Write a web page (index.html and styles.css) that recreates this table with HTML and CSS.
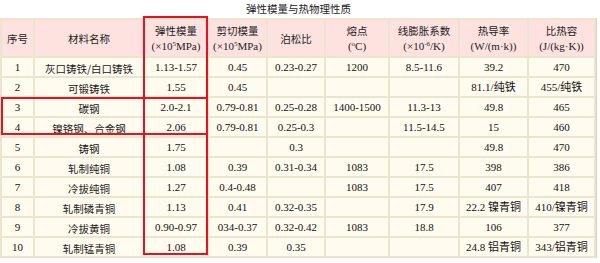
FILE: index.html
```html
<!DOCTYPE html>
<html lang="zh-CN">
<head>
<meta charset="utf-8">
<title>弹性模量与热物理性质</title>
<link rel="stylesheet" href="styles.css">
</head>
<body>
<div class="wrap">
  <div class="title">弹性模量与热物理性质</div>
  <table class="tbl">
    <colgroup>
      <col class="c1"><col class="c2"><col class="c3"><col class="c4"><col class="c5"><col class="c6"><col class="c7"><col class="c8"><col class="c9">
    </colgroup>
    <thead>
      <tr>
        <th>序号</th>
        <th>材料名称</th>
        <th>弹性模量<br><span class="u">(×10<sup>5</sup>MPa)</span></th>
        <th>剪切模量<br><span class="u">(×10<sup>5</sup>MPa)</span></th>
        <th>泊松比</th>
        <th>熔点<br><span class="u">(<sup>o</sup>C)</span></th>
        <th>线膨胀系数<br><span class="u">(×10<sup>-6</sup>/K)</span></th>
        <th>热导率<br><span class="u">(W/(m·k))</span></th>
        <th>比热容<br><span class="u">(J/(kg·K))</span></th>
      </tr>
    </thead>
    <tbody>
      <tr><td>1</td><td>灰口铸铁/白口铸铁</td><td>1.13-1.57</td><td>0.45</td><td>0.23-0.27</td><td>1200</td><td>8.5-11.6</td><td>39.2</td><td>470</td></tr>
      <tr><td>2</td><td>可锻铸铁</td><td>1.55</td><td>0.45</td><td></td><td></td><td></td><td>81.1/纯铁</td><td>455/纯铁</td></tr>
      <tr><td>3</td><td>碳钢</td><td>2.0-2.1</td><td>0.79-0.81</td><td>0.25-0.28</td><td>1400-1500</td><td>11.3-13</td><td>49.8</td><td>465</td></tr>
      <tr><td>4</td><td>镍铬钢、合金钢</td><td>2.06</td><td>0.79-0.81</td><td>0.25-0.3</td><td></td><td>11.5-14.5</td><td>15</td><td>460</td></tr>
      <tr><td>5</td><td>铸钢</td><td>1.75</td><td></td><td>0.3</td><td></td><td></td><td>49.8</td><td>470</td></tr>
      <tr><td>6</td><td>轧制纯铜</td><td>1.08</td><td>0.39</td><td>0.31-0.34</td><td>1083</td><td>17.5</td><td>398</td><td>386</td></tr>
      <tr><td>7</td><td>冷拔纯铜</td><td>1.27</td><td>0.4-0.48</td><td></td><td>1083</td><td>17.5</td><td>407</td><td>418</td></tr>
      <tr><td>8</td><td>轧制磷青铜</td><td>1.13</td><td>0.41</td><td>0.32-0.35</td><td></td><td>17.9</td><td>22.2 镍青铜</td><td>410/镍青铜</td></tr>
      <tr><td>9</td><td>冷拔黄铜</td><td>0.90-0.97</td><td>034-0.37</td><td>0.32-0.42</td><td>1083</td><td>18.8</td><td>106</td><td>377</td></tr>
      <tr><td>10</td><td>轧制锰青铜</td><td>1.08</td><td>0.39</td><td>0.35</td><td></td><td></td><td>24.8 铝青铜</td><td>343/铝青铜</td></tr>
    </tbody>
  </table>
  <div class="mark mark-col"></div>
  <div class="mark mark-rows"></div>
</div>
</body>
</html>
```
FILE: styles.css
```css
html, body {
  margin: 0;
  padding: 0;
  background: #ffffff;
}
body {
  font-family: "Liberation Serif", "Noto Sans CJK SC", serif;
  font-size: 11px;
  color: #111;
}
.wrap {
  position: relative;
  width: 600px;
  height: 263px;
}
.title {
  width: 597px;
  height: 18px;
  line-height: 18px;
  text-align: center;
  font-family: "Noto Sans CJK SC", sans-serif;
  font-size: 10.5px;
  color: #222;
}
.tbl {
  table-layout: fixed;
  border-collapse: separate;
  border-spacing: 2px;
  width: 597px;
  background: #ebe4cf;
  border-right: 1px solid #d9d2bd;
}
.c1 { width: 31px; }
.c2 { width: 108px; }
.c3 { width: 62px; }
.c4 { width: 57px; }
.c5 { width: 56px; }
.c6 { width: 62px; }
.c7 { width: 68px; }
.c8 { width: 67px; }
.c9 { width: 65px; }
.tbl th, .tbl td {
  padding: 0;
  text-align: center;
  vertical-align: middle;
  white-space: nowrap;
  overflow: hidden;
}
.tbl th {
  height: 36px;
  background: #fde2e0;
  font-weight: normal;
  font-family: "Noto Sans CJK SC", sans-serif;
  font-size: 10.5px;
  line-height: 15px;
  color: #222;
}
.tbl th .u {
  font-family: "Liberation Serif", "Noto Sans CJK SC", serif;
  font-size: 11px;
}
.tbl th sup {
  font-size: 7px;
  vertical-align: 4px;
  line-height: 0;
}
.tbl td {
  height: 18px;
  line-height: 18px;
  background: #fffbee;
}
.tbl td:nth-child(2) {
  font-family: "Noto Sans CJK SC", sans-serif;
  font-size: 10.5px;
  color: #222;
  padding-top: 3px;
  height: 15px;
  line-height: 15px;
}
.mark {
  position: absolute;
  border: 2px solid #ee0f1c;
  box-sizing: border-box;
  pointer-events: none;
}
.mark-col {
  left: 143px;
  top: 16px;
  width: 65px;
  height: 239px;
}
.mark-rows {
  left: 1px;
  top: 97px;
  width: 207px;
  height: 38px;
}
```
